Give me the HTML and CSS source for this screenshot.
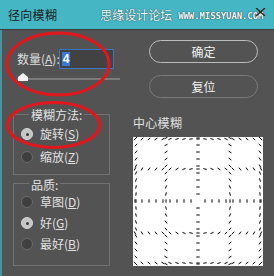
FILE: index.html
```html
<!DOCTYPE html>
<html lang="zh">
<head>
<meta charset="utf-8">
<link rel="stylesheet" href="styles.css">
</head>
<body>
<div class="dialog">
  <div class="titlebar">
    <span class="title">径向模糊</span>
    <span class="wm-cn">思缘设计论坛</span>
    <span class="wm-en">WWW.MISSYUAN.COM</span>
    <svg class="close" width="11" height="8" viewBox="0 0 11 8"><path d="M1 0 L10 8 M10 0 L1 8" stroke="#262626" stroke-width="1.4" fill="none"/></svg>
  </div>
  <div class="main">
    <div class="left">
      <div class="amount">
        <span class="amount-label">数量(<u>A</u>):</span>
        <div class="amount-input"><span class="sel">4</span></div>
      </div>
      <div class="slider">
        <svg class="thumb" width="10" height="8" viewBox="0 0 10 8"><path d="M0 8 L0 4 L5 0 L10 4 L10 8 Z" fill="#f2f2f2"/></svg>
      </div>
      <div class="group g1">
        <div class="legend">模糊方法:</div>
        <div class="radio on"><span class="dot"></span><span>旋转(<u>S</u>)</span></div>
        <div class="radio"><span class="dot"></span><span>缩放(<u>Z</u>)</span></div>
      </div>
      <div class="group g2">
        <div class="legend">品质:</div>
        <div class="radio"><span class="dot"></span><span>草图(<u>D</u>)</span></div>
        <div class="radio on"><span class="dot"></span><span>好(<u>G</u>)</span></div>
        <div class="radio"><span class="dot"></span><span>最好(<u>B</u>)</span></div>
      </div>
    </div>
    <div class="right">
      <div class="btn primary">确定</div>
      <div class="btn">复位</div>
      <div class="center-label">中心模糊</div>
      <div class="preview"><svg id="ticks" width="130" height="129" viewBox="0 0 130 129"></svg></div>
    </div>
  </div>
  <svg class="marks" width="274" height="276" viewBox="0 0 274 276">
    <ellipse cx="58" cy="64" rx="51" ry="31" fill="none" stroke="#e2161d" stroke-width="3"/>
    <ellipse cx="53.5" cy="125" rx="46" ry="22.5" fill="none" stroke="#e2161d" stroke-width="3"/>
  </svg>
</div>
<script src="script.js"></script>
</body>
</html>
```
FILE: styles.css
```css
html, body {
  margin: 0;
  padding: 0;
  background: #535353;
}
.dialog {
  position: relative;
  width: 274px;
  height: 276px;
  overflow: hidden;
  background: #535353;
  font-family: "Noto Sans CJK SC", "Noto Sans", sans-serif;
  color: #dedede;
  font-size: 12px;
}
.titlebar {
  position: relative;
  height: 29px;
  background: #44b6c4;
  border-bottom: 1px solid #3c3c3c;
  display: flex;
  align-items: center;
}
.title {
  margin-left: 8px;
  font-size: 12px;
  letter-spacing: 0.3px;
  color: #1c1c1c;
}
.wm-cn {
  margin-left: 43px;
  font-size: 12px;
  color: #eef9fa;
  letter-spacing: 0;
  text-shadow: 0 0 1px #2f4f55, 0 0 1px #2f4f55;
}
.wm-en {
  margin-left: 6px;
  margin-top: 3px;
  font-family: "DejaVu Sans Mono", monospace;
  font-weight: bold;
  font-size: 9px;
  letter-spacing: -0.1px;
  color: #f4fbfc;
  text-shadow: 0 0 1px #203a40, 0 0 1px #203a40;
}
.close {
  position: absolute;
  left: 255px;
  top: 8px;
}
.main {
  display: flex;
  height: 246px;
  border-left: 2px solid #4993a0;
}
.left {
  width: 107px;
  padding-left: 11px;
  display: flex;
  flex-direction: column;
}
.amount {
  margin-top: 19px;
  display: flex;
  height: 20px;
}
.amount-label {
  width: 46px;
  padding-left: 4px;
  box-sizing: border-box;
  line-height: 20px;
  white-space: nowrap;
  overflow: hidden;
}
.amount-input {
  width: 55px;
  height: 20px;
  box-sizing: border-box;
  border: 1px solid #3b78c2;
  background: #424242;
  padding: 2px;
}
.sel {
  display: block;
  width: 8px;
  height: 14px;
  background: #3a78d2;
  color: #fff;
  font-family: "Liberation Sans", sans-serif;
  font-weight: bold;
  font-size: 12px;
  line-height: 14px;
  text-align: center;
}
.slider {
  position: relative;
  margin-top: 4px;
  margin-left: 4px;
  width: 103px;
  height: 5px;
  border-bottom: 2px solid #7b7b7b;
}
.thumb {
  position: absolute;
  left: 1px;
  top: 0;
}
.group {
  width: 97px;
  box-sizing: border-box;
  border: 1px solid #717171;
  display: flex;
  flex-direction: column;
}
.g1 {
  margin-top: 34px;
  height: 61px;
}
.g2 {
  margin-top: 8px;
  height: 83px;
}
.legend {
  align-self: flex-start;
  margin-left: 15px;
  padding: 0 2px;
  background: #535353;
  line-height: 14px;
  font-size: 12px;
  color: #e2e2e2;
}
.g1 .legend { margin-top: -7px; }
.g2 .legend { margin-top: -6px; }
.radio {
  display: flex;
  align-items: center;
  height: 16px;
  padding-left: 7px;
  gap: 7px;
  line-height: 16px;
  color: #e2e2e2;
}
.g1 .radio { margin-top: 4px; }
.g1 .radio + .radio { margin-top: 7px; }
.g2 .radio { margin-top: 2px; }
.g2 .radio + .radio { margin-top: 5px; }
.dot {
  width: 12px;
  height: 12px;
  box-sizing: border-box;
  border-radius: 50%;
  background: #3f3f3f;
  border: 1px solid #6a6a6a;
  display: flex;
  align-items: center;
  justify-content: center;
}
.radio.on .dot {
  background: #c6c6c6;
  border-color: #d4d4d4;
}
.radio.on .dot::after {
  content: "";
  width: 3px;
  height: 3px;
  border-radius: 50%;
  background: #3a3a3a;
}
.right {
  margin-left: 13px;
  width: 130px;
  display: flex;
  flex-direction: column;
}
.btn {
  margin-left: 16px;
  width: 109px;
  height: 23px;
  box-sizing: border-box;
  border: 1px solid #7a7a7a;
  border-radius: 12px;
  text-align: center;
  line-height: 21px;
  font-size: 12px;
  color: #f2f2f2;
}
.btn.primary {
  margin-top: 10px;
  border-color: #bcbcbc;
}
.btn + .btn {
  margin-top: 12px;
}
.center-label {
  margin-top: 18px;
  line-height: 14px;
  font-size: 12px;
  letter-spacing: 0.3px;
  color: #e0e0e0;
}
.preview {
  margin-top: 7px;
  width: 130px;
  height: 129px;
  background: #fff;
}
.preview svg {
  display: block;
}
.marks {
  position: absolute;
  left: 0;
  top: 0;
  pointer-events: none;
}
```
FILE: script.js
```js
(function () {
  var svg = document.getElementById('ticks');
  var ns = 'http://www.w3.org/2000/svg';
  var cx = 65, cy = 64;
  var offs = [-62, -32, 0, 32, 62];
  var seen = {};
  var pts = [];
  function add(x, y) {
    var k = x + ',' + y;
    if (seen[k]) return;
    seen[k] = 1;
    pts.push([x, y]);
  }
  offs.forEach(function (o) {
    for (var t = -63; t <= 63; t += 7) {
      add(t, o);
      add(o, t);
    }
  });
  var L = 3.4;
  pts.forEach(function (p) {
    var x = p[0], y = p[1];
    var r = Math.sqrt(x * x + y * y);
    if (r === 0) return;
    var tx = -y / r, ty = x / r;
    var line = document.createElementNS(ns, 'line');
    line.setAttribute('x1', (cx + x - tx * L / 2).toFixed(2));
    line.setAttribute('y1', (cy + y - ty * L / 2).toFixed(2));
    line.setAttribute('x2', (cx + x + tx * L / 2).toFixed(2));
    line.setAttribute('y2', (cy + y + ty * L / 2).toFixed(2));
    line.setAttribute('stroke', '#000');
    line.setAttribute('stroke-width', '1');
    svg.appendChild(line);
  });
})();
```
